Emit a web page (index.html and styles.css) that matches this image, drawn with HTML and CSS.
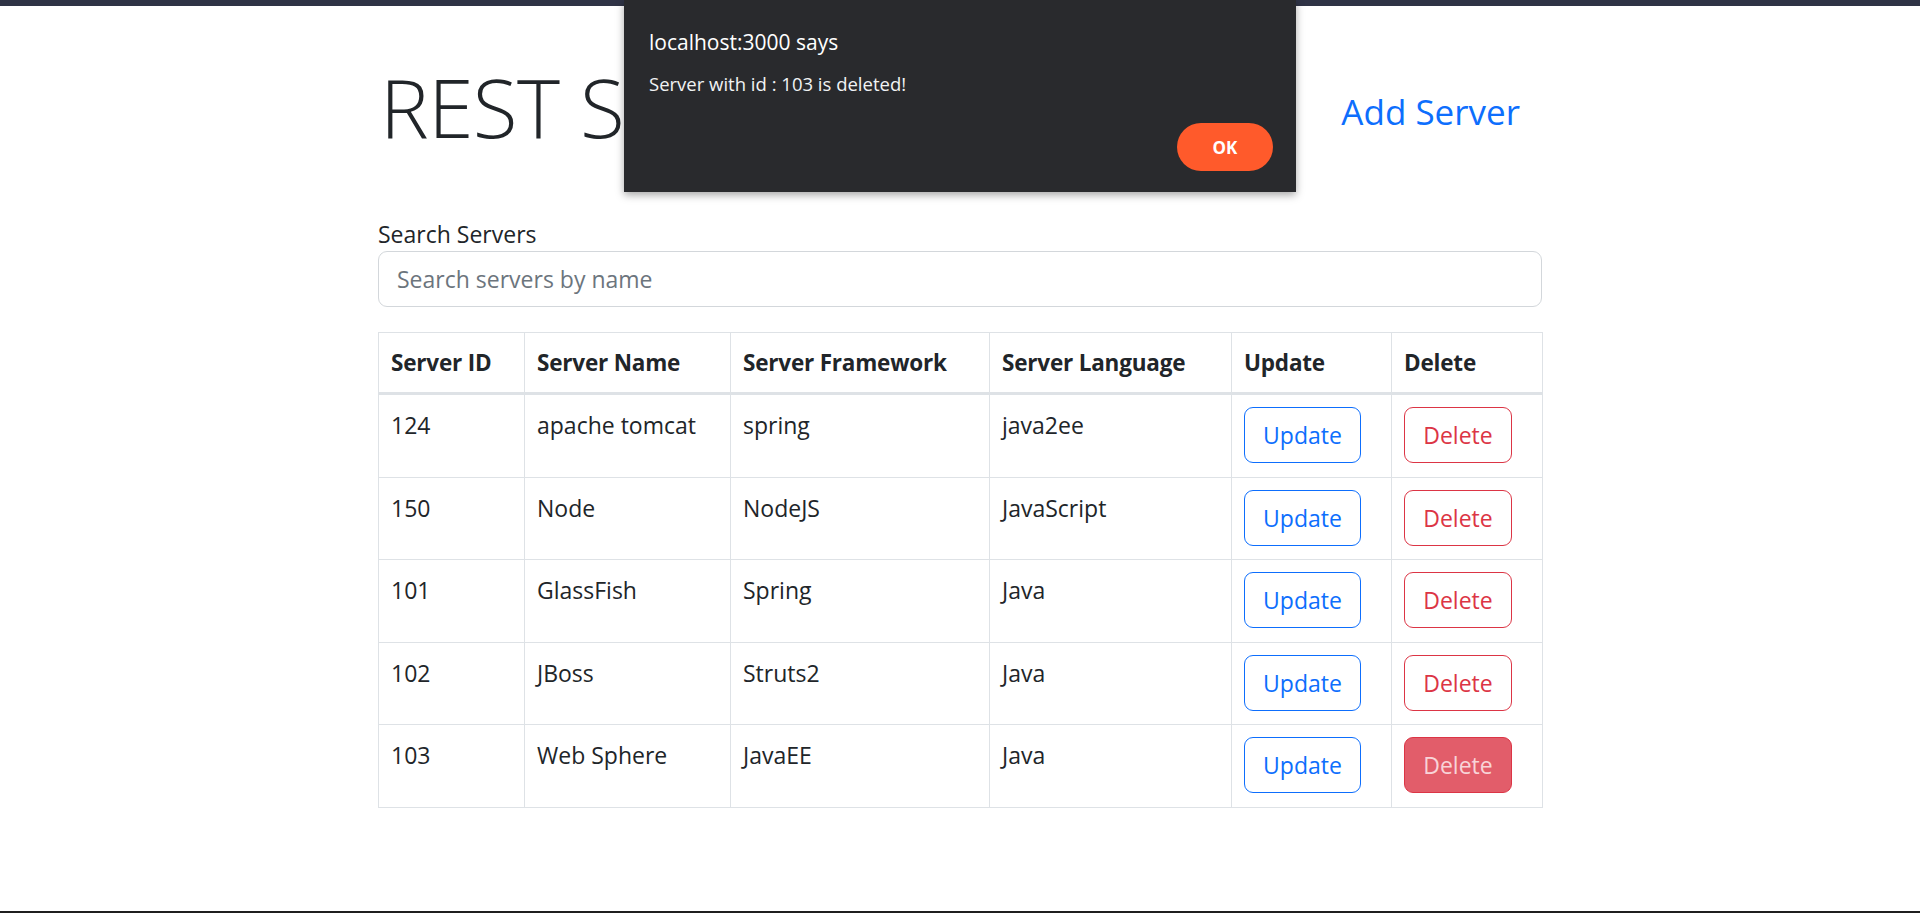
FILE: index.html
```html
<!DOCTYPE html>
<html lang="en">
<head>
<meta charset="utf-8">
<title>REST Servers</title>
<link rel="stylesheet" href="styles.css">
</head>
<body>
<div class="topbar"></div>
<main class="container">
  <header class="page-header">
    <h1 class="title">REST Servers</h1>
    <a class="add-link" href="#">Add Server</a>
  </header>
  <section class="search">
    <label class="search-label" for="q">Search Servers</label>
    <input class="search-input" id="q" type="text" placeholder="Search servers by name">
  </section>
  <table class="servers">
    <colgroup>
      <col class="c-id"><col class="c-name"><col class="c-fw"><col class="c-lang"><col class="c-upd"><col class="c-del">
    </colgroup>
    <thead>
      <tr><th>Server ID</th><th>Server Name</th><th>Server Framework</th><th>Server Language</th><th>Update</th><th>Delete</th></tr>
    </thead>
    <tbody>
      <tr><td>124</td><td>apache tomcat</td><td>spring</td><td>java2ee</td><td><button class="btn btn-update">Update</button></td><td><button class="btn btn-delete">Delete</button></td></tr>
      <tr><td>150</td><td>Node</td><td>NodeJS</td><td>JavaScript</td><td><button class="btn btn-update">Update</button></td><td><button class="btn btn-delete">Delete</button></td></tr>
      <tr><td>101</td><td>GlassFish</td><td>Spring</td><td>Java</td><td><button class="btn btn-update">Update</button></td><td><button class="btn btn-delete">Delete</button></td></tr>
      <tr><td>102</td><td>JBoss</td><td>Struts2</td><td>Java</td><td><button class="btn btn-update">Update</button></td><td><button class="btn btn-delete">Delete</button></td></tr>
      <tr><td>103</td><td>Web Sphere</td><td>JavaEE</td><td>Java</td><td><button class="btn btn-update">Update</button></td><td><button class="btn btn-delete is-active">Delete</button></td></tr>
    </tbody>
  </table>
</main>
<div class="bottom-line"></div>

<div class="alert-dialog" role="alertdialog">
  <div class="alert-title">localhost:3000 says</div>
  <div class="alert-msg">Server with id : 103 is deleted!</div>
  <div class="alert-actions"><button class="alert-ok">OK</button></div>
</div>
</body>
</html>
```

FILE: styles.css
```css
html, body {
  margin: 0;
  padding: 0;
}
body {
  width: 1920px;
  height: 913px;
  background: #fff;
  font-family: "Open Sans", "Noto Sans", sans-serif;
  color: #212529;
  font-size: 23px;
  line-height: 36px;
  position: relative;
  overflow: hidden;
}
.topbar {
  height: 6px;
  background: #2f3345;
}
.container {
  width: 1164px;
  margin: 0 auto;
}
.page-header {
  display: flex;
  justify-content: space-between;
  align-items: center;
  padding-top: 50px;
  height: 101px;
}
.title {
  margin: 0;
  font-size: 82px;
  font-weight: 300;
  line-height: 101px;
  letter-spacing: -0.6px;
  padding-left: 2px;
  color: #212529;
}
.add-link {
  color: #0d6efd;
  text-decoration: none;
  font-size: 35px;
  line-height: 54px;
  margin-top: 10px;
  padding-right: 22px;
}
.search {
  margin-top: 59px;
  display: flex;
  flex-direction: column;
}
.search-label {
  display: block;
  line-height: 36px;
  height: 35px;
}
.search-input {
  box-sizing: border-box;
  height: 56px;
  width: 100%;
  border: 1px solid #d3d7db;
  border-radius: 9px;
  padding: 0 18px;
  font-family: inherit;
  font-size: 23px;
  color: #212529;
  outline: none;
}
.search-input::placeholder {
  color: #6c757d;
}
.servers {
  margin-top: 25px;
  width: 1164px;
  border-collapse: collapse;
  table-layout: fixed;
}
.c-id { width: 146px; }
.c-name { width: 206px; }
.c-fw { width: 259px; }
.c-lang { width: 242px; }
.c-upd { width: 160px; }
.c-del { width: 151px; }
.servers th,
.servers td {
  border: 1px solid #dee2e6;
  text-align: left;
  vertical-align: top;
  padding: 12px 12px 13.6px;
}
.servers th {
  font-weight: 700;
  font-size: 22.5px;
  padding: 12px 12px 11px;
  border-bottom: 3px solid #dee2e6;
  letter-spacing: -0.2px;
}
.servers td {
  font-size: 23px;
}
.btn {
  box-sizing: border-box;
  height: 56px;
  border-radius: 9px;
  background: #fff;
  font-family: inherit;
  font-size: 23px;
  line-height: 36px;
  padding: 0;
  display: block;
  cursor: pointer;
}
.btn-update {
  width: 117px;
  border: 1px solid #0d6efd;
  color: #0d6efd;
}
.btn-delete {
  width: 108px;
  border: 1px solid #dc3545;
  color: #dc3545;
}
.btn-delete.is-active {
  background: #e25d6a;
  color: #f8d4d8;
}
.bottom-line {
  position: absolute;
  left: 0;
  right: 0;
  bottom: 0;
  height: 2px;
  background: #1f1f1f;
}
.alert-dialog {
  position: absolute;
  left: 624px;
  top: 0;
  width: 672px;
  height: 192px;
  box-sizing: border-box;
  background: #292a2d;
  box-shadow: 0 3px 8px rgba(0, 0, 0, 0.35);
  padding: 27px 23px 21px 25px;
  color: #fff;
  display: flex;
  flex-direction: column;
}
.alert-title {
  font-size: 21px;
  line-height: 30px;
  color: #ffffff;
}
.alert-msg {
  margin-top: 13px;
  font-size: 18.5px;
  line-height: 28px;
  color: #f1f3f4;
}
.alert-actions {
  margin-top: auto;
  display: flex;
  justify-content: flex-end;
}
.alert-ok {
  width: 96px;
  height: 48px;
  border: none;
  border-radius: 24px;
  background: #ff5a2b;
  color: #fff;
  font-family: inherit;
  font-weight: 700;
  font-size: 17px;
}
```
